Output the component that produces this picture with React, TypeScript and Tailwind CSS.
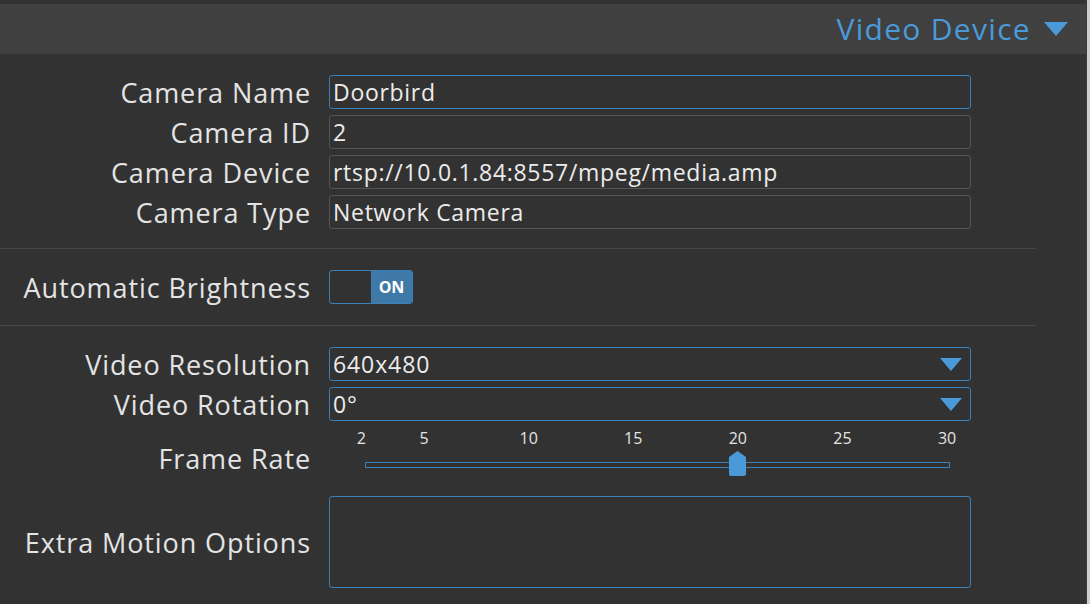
import React from 'react';

const ticks = [2, 5, 10, 15, 20, 25, 30];
// x offset (px, inside the slider area) of a value on the scale
const valueX = (v: number) => 32.3 + (v - 2) * 20.92;

function Label({ children }: { children: React.ReactNode }) {
  return (
    <div className="w-[311px] shrink-0 text-right text-[27px] leading-none text-[#e4e4e4] tracking-[0.9px]">
      {children}
    </div>
  );
}

function TextField({ value, focused }: { value: string; focused?: boolean }) {
  return (
    <div
      className={`ml-[18px] w-[642px] h-[34px] rounded-[3px] border flex items-center px-[3px] text-[23px] text-[#ececec] tracking-[0.7px] ${
        focused ? 'border-[#3c80b8]' : 'border-[#555555]'
      }`}
    >
      {value}
    </div>
  );
}

function SelectField({ value }: { value: string }) {
  return (
    <div className="ml-[18px] w-[642px] h-[34px] rounded-[3px] border border-[#3c80b8] flex items-center justify-between pl-[3px] pr-[8px] text-[23px] text-[#ececec] tracking-[0.9px]">
      <span>{value}</span>
      <svg width="22" height="13" viewBox="0 0 22 13">
        <polygon points="0,0 22,0 11,13" fill="#4a9ad9" />
      </svg>
    </div>
  );
}

export default function App() {
  return (
    <div className="w-[1090px] h-[604px] bg-[#323232] flex overflow-hidden" style={{ fontFamily: '"Open Sans", "Noto Sans", sans-serif' }}>
      <div className="w-[1086px] flex flex-col pt-1">
        {/* Header */}
        <div className="h-[50px] bg-[#404040] flex items-center justify-end pr-[18px]">
          <span className="text-[30px] text-[#4a9ad9] tracking-[1.3px] leading-none">Video Device</span>
          <svg className="ml-[13px]" width="24" height="14" viewBox="0 0 24 14">
            <polygon points="0,0 24,0 12,14" fill="#4a9ad9" />
          </svg>
        </div>

        {/* Camera fields */}
        <div className="flex flex-col gap-[6px] pt-[21px]">
          <div className="flex items-center">
            <Label>Camera Name</Label>
            <TextField value="Doorbird" focused />
          </div>
          <div className="flex items-center">
            <Label>Camera ID</Label>
            <TextField value="2" />
          </div>
          <div className="flex items-center">
            <Label>Camera Device</Label>
            <TextField value="rtsp://10.0.1.84:8557/mpeg/media.amp" />
          </div>
          <div className="flex items-center">
            <Label>Camera Type</Label>
            <TextField value="Network Camera" />
          </div>
        </div>

        <div className="mt-[19px] h-px w-[1036px] bg-[#474747]" />

        {/* Toggle */}
        <div className="mt-[21px] flex items-center">
          <Label>Automatic Brightness</Label>
          <div className="ml-[18px] w-[84px] h-[34px] rounded-[3px] border border-[#3c80b8] flex overflow-hidden">
            <div className="w-[41px]" />
            <div className="flex-1 bg-[#3f79a8] flex items-center justify-center text-[16px] font-bold text-white">ON</div>
          </div>
        </div>

        <div className="mt-[21px] h-px w-[1036px] bg-[#474747]" />

        {/* Video selects */}
        <div className="flex flex-col gap-[6px] pt-[21px]">
          <div className="flex items-center">
            <Label>Video Resolution</Label>
            <SelectField value="640x480" />
          </div>
          <div className="flex items-center">
            <Label>Video Rotation</Label>
            <SelectField value="0°" />
          </div>
        </div>

        {/* Frame rate slider */}
        <div className="flex items-center h-[75px]">
          <Label>Frame Rate</Label>
          <div className="ml-[18px] w-[642px] h-full relative">
            {ticks.map((t) => (
              <span
                key={t}
                className="absolute top-[9px] -translate-x-1/2 text-[16px] leading-none text-[#e4e4e4]"
                style={{ left: valueX(t) }}
              >
                {t}
              </span>
            ))}
            <div className="absolute left-[36px] top-[41px] w-[585px] h-[6px] border border-[#3c80b8]" />
            <svg
              className="absolute top-[30px]"
              style={{ left: valueX(20) - 8.5 }}
              width="17"
              height="25"
              viewBox="0 0 17 25"
            >
              <path d="M8.5 0 L17 6 L17 23 Q17 25 15 25 L2 25 Q0 25 0 23 L0 6 Z" fill="#4a9ad9" />
            </svg>
          </div>
        </div>

        {/* Extra motion options */}
        <div className="flex items-center">
          <Label>Extra Motion Options</Label>
          <div className="ml-[18px] w-[642px] h-[92px] rounded-[3px] border border-[#3c80b8]" />
        </div>
      </div>
      <div className="w-px bg-[#3c3c3c]" />
      <div className="flex-1 bg-[#cdcdcd]" />
    </div>
  );
}
